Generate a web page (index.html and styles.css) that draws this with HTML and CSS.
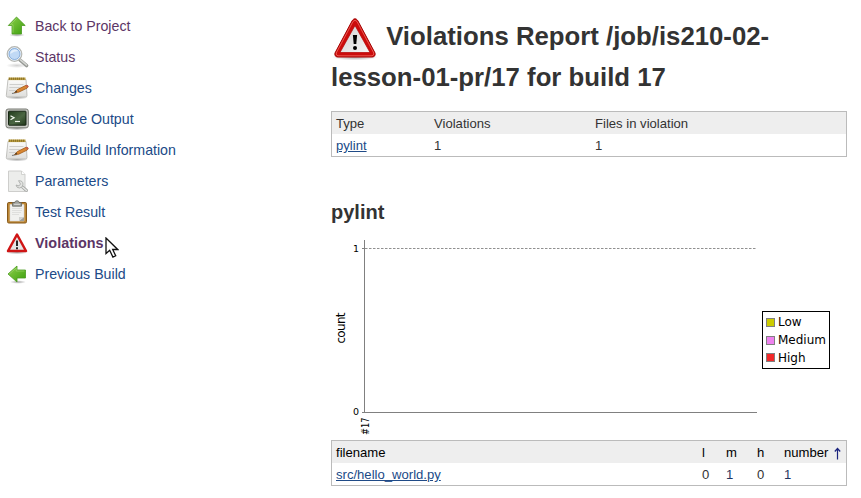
FILE: index.html
```html
<!DOCTYPE html>
<html lang="en">
<head>
<meta charset="utf-8">
<title>Violations Report</title>
<link rel="stylesheet" href="styles.css">
</head>
<body>
<svg class="defs" width="0" height="0" aria-hidden="true">
  <defs>
    <linearGradient id="green" x1="0" y1="0" x2="1" y2="1"><stop offset="0" stop-color="#8fd04e"/><stop offset="1" stop-color="#3b9f0c"/></linearGradient>
    <linearGradient id="paper" x1="0" y1="0" x2="0" y2="1"><stop offset="0" stop-color="#fbfbfa"/><stop offset="1" stop-color="#dededc"/></linearGradient>
    <linearGradient id="plate" x1="0" y1="0" x2="1" y2="1"><stop offset="0" stop-color="#cfcfcf"/><stop offset="1" stop-color="#f7f7f7"/></linearGradient>
    <linearGradient id="screen" x1="0" y1="0" x2="1" y2="1"><stop offset="0" stop-color="#1f3a1a"/><stop offset=".55" stop-color="#4b6643"/><stop offset="1" stop-color="#203619"/></linearGradient>
    <radialGradient id="shade"><stop offset="0" stop-color="#000" stop-opacity=".35"/><stop offset="1" stop-color="#000" stop-opacity="0"/></radialGradient>
    <symbol id="notepad" viewBox="0 0 24 24">
      <ellipse cx="12" cy="21.500" rx="11" ry="2" fill="url(#shade)"/>
      <path d="M3 3.500h18l1 16q0 1.500-1.500 1.500h-18q-1.200 0-1.200-1.500z" fill="url(#paper)" stroke="#b4b4b0" stroke-width=".8"/>
      <path d="M3.500 1.500h17v2.600h-17z" fill="#b79a3e"/>
      <path d="M4 2.700h16" stroke="#8d752b" stroke-width="2" stroke-dasharray="1 1"/>
      <path d="M4.500 8.500h14M4.300 11.500h11M4 14.500h8" stroke="#cfcfcd" stroke-width="1"/>
      <path d="M7 17.500l5-1" stroke="#777" stroke-width="1.200"/>
      <path d="M9.500 16.500l3-3 8.500-4.200q2-.4 2.200 1.300l-1 1.500-8.500 4.100z" fill="#d98732" stroke="#96500f" stroke-width=".7"/>
      <path d="M20.400 9.300l1-.4q2 0 2 1.800l-1.300 1z" fill="#c75b4e"/>
      <path d="M9.500 16.500l1.700-1.700 1.200 1.200z" fill="#443829"/>
    </symbol>
    <symbol id="warning" viewBox="0 0 48 48">
      <ellipse cx="24" cy="42" rx="23" ry="3.500" fill="url(#shade)"/>
      <path d="M21.300 5.500q2.700-3.500 5.400 0L44 38q.8 3.500-2.500 4h-35q-3.300-.5-2.500-4z" fill="#cc0c0c" stroke="#a10000" stroke-width="1"/>
      <path d="M22 6.500q2-2.500 4 0L42.800 38q.3 2.500-1.800 2.800H7q-2.100-.3-1.800-2.800z" fill="none" stroke="#f36b61" stroke-width=".8"/>
      <path d="M24 10.500L39 37.500H9z" fill="url(#plate)" stroke="#b30000" stroke-width=".7"/>
      <path d="M21.900 20h4.200l-.8 9h-2.600z" fill="#000"/><circle cx="24" cy="33" r="2" fill="#000"/>
    </symbol>
    <symbol id="warning-small" viewBox="0 0 24 24">
      <ellipse cx="12" cy="21.500" rx="11" ry="1.800" fill="url(#shade)"/>
      <path d="M12 3.500L21 20H3z" fill="#e6e6e6" stroke="#cf1515" stroke-width="2.500" stroke-linejoin="round"/>
      <path d="M12 9.500v5.500M12 16.300v1.900" stroke="#111" stroke-width="1.800"/>
    </symbol>
  </defs>
</svg>
<div class="page">
  <nav class="tasks">
    <a class="task visited" href="#"><svg class="icon" viewBox="0 0 24 24"><ellipse cx="12" cy="21" rx="8" ry="1.800" fill="url(#shade)"/><path d="M11.500 3l8.700 8.500h-3.700v8.500H7v-8.500H3.300z" fill="url(#green)" stroke="#4a9a20" stroke-width=".8" stroke-linejoin="round"/><path d="M11.500 4.500L5.400 10.700h2.600v8" fill="none" stroke="#a5dc72" stroke-width=".6"/></svg><span>Back to Project</span></a>
    <a class="task visited" href="#"><svg class="icon" viewBox="0 0 24 24"><ellipse cx="12" cy="20.500" rx="11" ry="2.500" fill="url(#shade)" opacity=".5"/><path d="M15 15l6.500 5.500" stroke="#969894" stroke-width="3.600" stroke-linecap="round"/><path d="M15.500 14.800l6 5.200" stroke="#d4d6d2" stroke-width="1.600" stroke-linecap="round"/><circle cx="9.500" cy="9" r="7.200" fill="#c0d9f5" stroke="#b5b7b3" stroke-width="1.400"/><circle cx="9.500" cy="9" r="6.200" fill="none" stroke="#eef3f8" stroke-width="1"/><circle cx="9.500" cy="9" r="5.500" fill="none" stroke="#78a3d5" stroke-width=".8"/><path d="M5.200 9q0-4 4.500-4.500 2.500 0 3.500 1.500-4 0-8 3z" fill="#e3effb"/></svg><span>Status</span></a>
    <a class="task" href="#"><svg class="icon"><use href="#notepad"/></svg><span>Changes</span></a>
    <a class="task" href="#"><svg class="icon" viewBox="0 0 24 24"><ellipse cx="12" cy="21.500" rx="11" ry="2" fill="url(#shade)"/><rect x="1" y="2" width="22.300" height="18.800" rx="2.200" fill="#c9cac5" stroke="#777973" stroke-width="1"/><rect x="3.500" y="4.200" width="17.500" height="14" rx=".6" fill="url(#screen)" stroke="#172514"/><path d="M5.500 8.700l3.500 2-3.500 2" fill="none" stroke="#eff5ec" stroke-width="1.300"/><path d="M10 14.500h5" stroke="#eff5ec" stroke-width="1.200"/></svg><span>Console Output</span></a>
    <a class="task" href="#"><svg class="icon"><use href="#notepad"/></svg><span>View Build Information</span></a>
    <a class="task" href="#"><svg class="icon" viewBox="0 0 24 24"><path d="M3.500 2h13l3.500 3.500v17H3.500z" fill="#ecedeb" stroke="#c9cac7" stroke-width=".9"/><path d="M16.500 2v3.500H20" fill="#fff" stroke="#c9cac7" stroke-width=".8"/><path d="M16.500 17.200l5 4.300" stroke="#a5a7a4" stroke-width="3" stroke-linecap="round"/><path d="M16 16.700l5.500 4.800" stroke="#e6e7e5" stroke-width="1.500" stroke-linecap="round"/><path d="M13.500 11.700q4.500-.2 4.500 3.500t-3.500 3.800q-3 0-3.500-3l3 .9 1.500-1.900z" fill="#e2e3e1" stroke="#a5a7a4" stroke-width=".8"/></svg><span>Parameters</span></a>
    <a class="task" href="#"><svg class="icon" viewBox="0 0 24 24"><rect x="2.500" y="2.500" width="19" height="20.500" rx="1.300" fill="#bd8734" stroke="#87591a" stroke-width="1"/><path d="M5 4.500h14v16.500H5z" fill="#f1f1ef" stroke="#d9d9d6" stroke-width=".6"/><path d="M7 8.500h10M7 10.500h10M7 12.500h9M7 14.500h7" stroke="#dcdcda" stroke-width=".9"/><path d="M19 17v4h-5z" fill="#9d9e9b"/><path d="M14 21v-4h5z" fill="#d0d1cf"/><path d="M7.500 2.700h2.200q.3-2 2.300-2t2.300 2h2.200v3.500h-9z" fill="#a0a29d" stroke="#666862" stroke-width=".8"/><path d="M9 4.300h6" stroke="#dcdcda"/></svg><span>Test Result</span></a>
    <a class="task visited current" href="#"><svg class="icon"><use href="#warning-small"/></svg><span>Violations</span></a>
    <a class="task" href="#"><svg class="icon" viewBox="0 0 24 24"><ellipse cx="13" cy="20" rx="8" ry="1.800" fill="url(#shade)"/><path d="M3 12L12 4v4h8.500v8H12v4z" fill="url(#green)" stroke="#4a9a20" stroke-width=".8" stroke-linejoin="round"/><path d="M4.300 12L11.200 6v3h8.300" fill="none" stroke="#a5dc72" stroke-width=".6"/></svg><span>Previous Build</span></a>
    <svg class="cursor" viewBox="0 0 14 22"><path d="M1 1v15.500l3.700-3.200 3.200 6.800 2.800-1.300-3-6.300h5z" fill="#fff" stroke="#111" stroke-width="1.300"/></svg>
  </nav>
  <main class="report">
    <h1><svg class="h1-icon"><use href="#warning"/></svg> Violations Report /job/is210-02-lesson-01-pr/17 for build 17</h1>
    <table class="pane summary">
      <colgroup><col class="c-type"><col class="c-viol"><col></colgroup>
      <tr class="head"><td>Type</td><td>Violations</td><td>Files in violation</td></tr>
      <tr><td><a href="#">pylint</a></td><td>1</td><td>1</td></tr>
    </table>
    <h2>pylint</h2>
    <svg class="chart" viewBox="331 240 516 200">
      <path d="M364.500 240v172.500H757M362 248.500h5M362 412.500h3" fill="none" stroke="#808080"/>
      <path d="M365 248.500h391" stroke="#909090" stroke-dasharray="2.500 1.500"/>
      <g class="tick"><text x="353" y="252">1</text><text x="353" y="415">0</text><text class="build" transform="translate(368.500 435) rotate(-90)" textLength="17.500" lengthAdjust="spacingAndGlyphs">#17</text></g>
      <text class="label" transform="translate(345 343.500) rotate(-90)" textLength="31">count</text>
      <rect x="762.500" y="311.500" width="67" height="57" fill="#fff" stroke="#000"/>
      <g stroke="#808080"><rect x="766.500" y="318.500" width="8" height="8" fill="#cc0"/><rect x="766.500" y="336.500" width="8" height="8" fill="#ee82ee"/><rect x="766.500" y="353.500" width="8" height="8" fill="#f22929"/></g>
      <g class="label"><text x="778" y="326">Low</text><text x="778" y="344">Medium</text><text x="778" y="362">High</text></g>
    </svg>
    <table class="pane files">
      <colgroup><col class="c-file"><col class="c-l"><col class="c-m"><col class="c-h"><col></colgroup>
      <tr class="head"><td>filename</td><td>l</td><td>m</td><td>h</td><td><span class="sort"><span>number</span><svg class="arrow" viewBox="0 0 7 13"><path d="M3.500 12.500V1.500M.8 4.500l2.700-3 2.700 3" fill="none" stroke="#1a237e" stroke-width="1.200"/></svg></span></td></tr>
      <tr><td><a href="#">src/hello_world.py</a></td><td>0</td><td class="linkish">1</td><td>0</td><td class="linkish">1</td></tr>
    </table>
  </main>
</div>
</body>
</html>
```
FILE: styles.css
```css
* { box-sizing: border-box; }
body { margin: 0; background: #fff; color: #333; font-family: "Liberation Sans", Arial, sans-serif; font-size: 13.1px; overflow: hidden; }
.defs { position: absolute; }
.page { display: grid; grid-template-columns: 331px 516px; height: 498px; }
.tasks { position: relative; padding: 10px 0 0 5px; }
.task { display: flex; align-items: center; gap: 6px; height: 31px; color: #204a87; font-size: 14.2px; text-decoration: none; }
.visited { color: #5c3566; }
.current { font-weight: bold; font-size: 14.4px; }
.icon { width: 24px; height: 24px; flex: none; }
.cursor { position: absolute; left: 105px; top: 237px; width: 14px; height: 22px; }
.report { padding-top: 16px; }
h1 { margin: 0; font-size: 25.75px; line-height: 41px; height: 95px; }
.h1-icon { width: 48px; height: 48px; vertical-align: middle; margin: -5px 0 -7px; }
.pane { width: 516px; height: 46px; border: 1px solid #bbb; border-collapse: separate; border-spacing: 0; table-layout: fixed; }
.pane td { padding: 2px 0 0 4px; height: 22px; line-height: 20px; vertical-align: middle; white-space: nowrap; }
.head td { background: #eee; }
.files .head { color: #000; }
.pane a { color: #204a87; }
.c-type { width: 98px; }
.c-viol { width: 161px; }
.c-file { width: 366px; }
.c-l { width: 24px; }
.c-m { width: 31px; }
.c-h { width: 27px; }
.linkish { color: #1f3560; }
.sort { display: flex; align-items: center; justify-content: space-between; padding-right: 5px; }
.arrow { width: 7px; height: 13px; }
h2 { margin: 42px 0 0; height: 41px; font-size: 20px; line-height: 26px; }
.chart { display: block; width: 516px; height: 200px; font-family: "DejaVu Sans", sans-serif; fill: #000; }
.tick { font-size: 9.500px; }
.build { font-size: 10.5px; }
.label { font-size: 12px; }
```
